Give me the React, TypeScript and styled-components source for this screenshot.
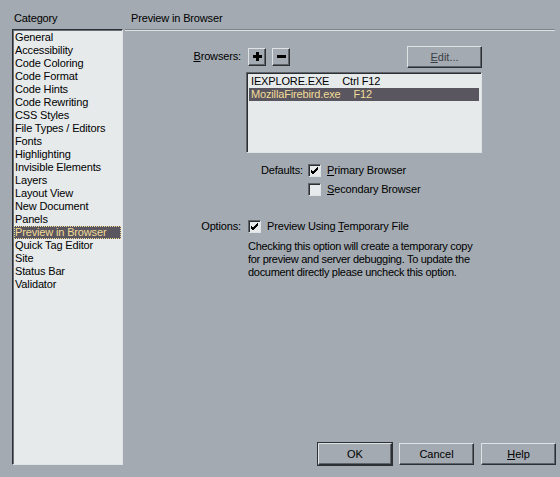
import React from 'react'
import styled, { createGlobalStyle } from 'styled-components'

const FACE = '#a3aab1'
const LIGHT = '#dfe3e6'
const SHADOW = '#5e646a'
const DARK = '#2c3034'
const WELL = '#e6eaeb'
const PICK = '#5a5660'
const PICK_TEXT = '#f2dc96'

const Global = createGlobalStyle`
  html, body { margin: 0; padding: 0; background: ${FACE}; }
  body {
    font-family: "Liberation Sans", Arial, sans-serif;
    font-size: 11px;
    letter-spacing: -0.15px;
    color: #000;
  }
`

const Dialog = styled.div`
  width: 560px;
  height: 477px;
  background: ${FACE};
  display: flex;
  padding: 11px 4px 0 12px;
  box-sizing: border-box;
`

const CategoryCol = styled.div`
  width: 111px;
  display: flex;
  flex-direction: column;
`

const Caption = styled.div<{ $indent?: number }>`
  height: 18px;
  line-height: 14px;
  padding-left: ${p => p.$indent ?? 2}px;
`

const CategoryList = styled.ul`
  list-style: none;
  margin: 0;
  padding: 1px 1px 0 1px;
  height: 436px;
  box-sizing: border-box;
  background: ${WELL};
  border-left: 1px solid ${DARK};
  border-top: 1px solid ${DARK};
  border-right: 1px solid ${LIGHT};
  border-bottom: 1px solid ${LIGHT};
  box-shadow: inset 1px 1px 0 #6a7076;
`

const Row = styled.li<{ $on?: boolean }>`
  height: 13px;
  line-height: 13px;
  padding-left: 1px;
  white-space: nowrap;
  background: ${p => (p.$on ? PICK : 'transparent')};
  color: ${p => (p.$on ? PICK_TEXT : '#000')};
  outline: ${p => (p.$on ? `1px dotted ${PICK_TEXT}` : 'none')};
  outline-offset: -1px;
`

const Panel = styled.div`
  flex: 1;
  display: flex;
  flex-direction: column;
  padding-left: 2px;
`

const Rule = styled.div`
  height: 0;
  border-top: 1px solid #7d848b;
  border-bottom: 1px solid ${LIGHT};
  margin-right: 1px;
`

const Form = styled.div`
  display: grid;
  grid-template-columns: 116px 236px;
  column-gap: 5px;
  padding-top: 14px;
  align-items: center;
`

const Label = styled.div`
  text-align: right;
  line-height: 13px;
  white-space: nowrap;
`

const Key = styled.span`
  text-decoration: underline;
  text-underline-offset: 1px;
`

const Toolbar = styled.div`
  display: flex;
  align-items: center;
  gap: 6px;
  height: 23px;
  padding-left: 2px;
`

const Button = styled.button<{ $w?: number; $default?: boolean }>`
  width: ${p => p.$w ?? 18}px;
  height: ${p => (p.$w ? 22 : 18)}px;
  padding: 0;
  margin: 0;
  background: ${FACE};
  font: inherit;
  color: #000;
  border: 1px solid;
  border-color: ${LIGHT} ${DARK} ${DARK} ${LIGHT};
  box-shadow: ${p =>
    p.$default
      ? `0 0 0 1px ${DARK}, inset -1px -1px 0 ${SHADOW}`
      : `inset -1px -1px 0 ${SHADOW}`};
  display: flex;
  align-items: center;
  justify-content: center;
`

const EditButton = styled(Button)`
  margin-left: auto;
  color: #3c4046;
`

const Well = styled.div`
  grid-column: 2;
  margin-top: 4px;
  height: 81px;
  box-sizing: border-box;
  background: ${WELL};
  border-left: 1px solid ${SHADOW};
  border-top: 1px solid ${SHADOW};
  border-right: 1px solid ${LIGHT};
  border-bottom: 1px solid ${LIGHT};
  box-shadow: inset 1px 1px 0 ${DARK};
  padding: 2px 2px;
`

const BrowserRow = styled.div<{ $on?: boolean }>`
  display: flex;
  gap: 13px;
  height: 13px;
  line-height: 13px;
  padding-left: 2px;
  white-space: nowrap;
  background: ${p => (p.$on ? PICK : 'transparent')};
  color: ${p => (p.$on ? PICK_TEXT : '#000')};
`

const Defaults = styled.div`
  grid-column: 2;
  display: grid;
  grid-template-columns: 57px auto;
  column-gap: 5px;
  row-gap: 6px;
  align-items: center;
  margin-top: 11px;
`

const CheckLine = styled.label`
  display: flex;
  align-items: center;
  gap: 6px;
  height: 13px;
  line-height: 13px;
  white-space: nowrap;
`

const Box = styled.span`
  width: 13px;
  height: 13px;
  box-sizing: border-box;
  background: ${WELL};
  border-left: 1px solid ${SHADOW};
  border-top: 1px solid ${SHADOW};
  border-right: 1px solid ${LIGHT};
  border-bottom: 1px solid ${LIGHT};
  box-shadow: inset 1px 1px 0 ${DARK};
  display: flex;
  align-items: center;
  justify-content: center;
  flex: none;
`

const OptionLabel = styled(Label)`
  margin-top: 24px;
`

const OptionCheck = styled(CheckLine)`
  margin-top: 24px;
  padding-left: 2px;
`

const Note = styled.p`
  grid-column: 2;
  margin: 7px 0 0 2px;
  line-height: 13px;
  width: 236px;
  letter-spacing: -0.3px;
`

const Footer = styled.div`
  margin-top: auto;
  display: flex;
  justify-content: flex-end;
  gap: 7px;
  padding-bottom: 12px;
`

const Check = () => (
  <svg width="9" height="9" viewBox="0 0 9 9">
    <path d="M1 4 L3 6 L8 1 M1 5 L3 7 L8 2 M1 6 L3 8 L8 3" stroke="#000" strokeWidth="1" fill="none" shapeRendering="crispEdges" />
  </svg>
)

const Plus = () => (
  <svg width="9" height="9" viewBox="0 0 9 9">
    <rect x="3" y="0" width="3" height="9" fill="#000" />
    <rect x="0" y="3" width="9" height="3" fill="#000" />
  </svg>
)

const Minus = () => (
  <svg width="9" height="9" viewBox="0 0 9 9">
    <rect x="0" y="3" width="9" height="3" fill="#000" />
  </svg>
)

const categories = [
  'General',
  'Accessibility',
  'Code Coloring',
  'Code Format',
  'Code Hints',
  'Code Rewriting',
  'CSS Styles',
  'File Types / Editors',
  'Fonts',
  'Highlighting',
  'Invisible Elements',
  'Layers',
  'Layout View',
  'New Document',
  'Panels',
  'Preview in Browser',
  'Quick Tag Editor',
  'Site',
  'Status Bar',
  'Validator',
]

const browsers = [
  { name: 'IEXPLORE.EXE', key: 'Ctrl F12' },
  { name: 'MozillaFirebird.exe', key: 'F12' },
]

const App = () => {
  const current = 'Preview in Browser'
  const pickedBrowser = 1

  return (
    <Dialog>
      <Global />
      <CategoryCol>
        <Caption>Category</Caption>
        <CategoryList>
          {categories.map(c => (
            <Row key={c} $on={c === current}>
              {c}
            </Row>
          ))}
        </CategoryList>
      </CategoryCol>
      <Panel>
        <Caption $indent={6}>{current}</Caption>
        <Rule />
        <Form>
          <Label>
            <Key>B</Key>rowsers:
          </Label>
          <Toolbar>
            <Button title="add">
              <Plus />
            </Button>
            <Button title="remove">
              <Minus />
            </Button>
            <EditButton $w={75}>
              <span>
                <Key>E</Key>dit...
              </span>
            </EditButton>
          </Toolbar>
          <Well>
            {browsers.map((b, i) => (
              <BrowserRow key={b.name} $on={i === pickedBrowser}>
                <span>{b.name}</span>
                <span>{b.key}</span>
              </BrowserRow>
            ))}
          </Well>
          <Defaults>
            <Label>Defaults:</Label>
            <CheckLine>
              <Box>
                <Check />
              </Box>
              <span>
                <Key>P</Key>rimary Browser
              </span>
            </CheckLine>
            <span />
            <CheckLine>
              <Box />
              <span>
                <Key>S</Key>econdary Browser
              </span>
            </CheckLine>
          </Defaults>
          <OptionLabel>Options:</OptionLabel>
          <OptionCheck>
            <Box>
              <Check />
            </Box>
            <span>
              Preview Using <Key>T</Key>emporary File
            </span>
          </OptionCheck>
          <Note>
            Checking this option will create a temporary copy for preview and server debugging. To update the
            document directly please uncheck this option.
          </Note>
        </Form>
        <Footer>
          <Button $w={74} $default>
            OK
          </Button>
          <Button $w={75}>Cancel</Button>
          <Button $w={75}>
            <span>
              <Key>H</Key>elp
            </span>
          </Button>
        </Footer>
      </Panel>
    </Dialog>
  )
}

export default App
